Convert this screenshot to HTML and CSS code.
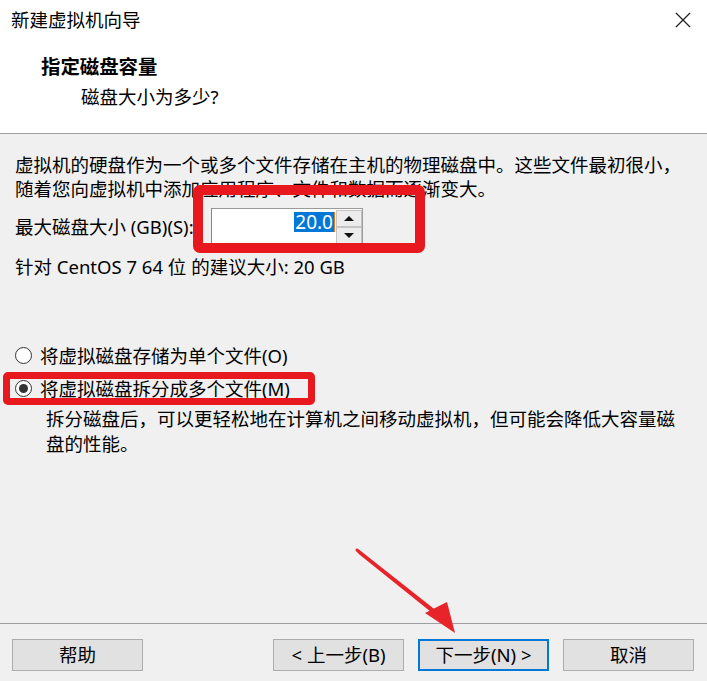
FILE: index.html
```html
<!DOCTYPE html>
<html lang="zh-CN">
<head>
<meta charset="utf-8">
<title>新建虚拟机向导</title>
<link rel="stylesheet" href="styles.css">
</head>
<body>
<div class="dialog">
  <header class="header">
    <div class="titlebar">
      <span class="title">新建虚拟机向导</span>
      <svg class="close" width="16" height="16" viewBox="0 0 16 16"><path d="M1 1 L15 15 M15 1 L1 15" stroke="#222" stroke-width="1.3" fill="none"/></svg>
    </div>
    <div class="heading">指定磁盘容量</div>
    <div class="subheading">磁盘大小为多少?</div>
  </header>

  <main class="content">
    <p class="intro">虚拟机的硬盘作为一个或多个文件存储在主机的物理磁盘中。这些文件最初很小，<br>随着您向虚拟机中添加应用程序、文件和数据而逐渐变大。</p>

    <div class="size-row">
      <label class="size-label">最大磁盘大小 (GB)(S):</label>
      <div class="spin">
        <div class="spin-field"><span class="spin-value">20.0</span></div>
        <div class="spin-btns">
          <span class="spin-btn"><span class="tri-up"></span></span>
          <span class="spin-btn"><span class="tri-down"></span></span>
        </div>
      </div>
    </div>

    <p class="recommend">针对 CentOS 7 64 位 的建议大小: 20 GB</p>

    <div class="options">
      <div class="radio"><span class="radio-circle"></span>将虚拟磁盘存储为单个文件(O)</div>
      <div class="radio"><span class="radio-circle checked"></span>将虚拟磁盘拆分成多个文件(M)</div>
      <p class="desc">拆分磁盘后，可以更轻松地在计算机之间移动虚拟机，但可能会降低大容量磁<br>盘的性能。</p>
    </div>
  </main>

  <footer class="footer">
    <button class="btn">帮助</button>
    <div class="nav-buttons">
      <button class="btn">&lt; 上一步(B)</button>
      <button class="btn btn-default">下一步(N) &gt;</button>
      <button class="btn">取消</button>
    </div>
  </footer>

  <div class="mark mark-size"></div>
  <div class="mark mark-split"></div>
  <svg class="arrow" width="707" height="681" viewBox="0 0 707 681">
    <path d="M357 550 L360 553 L436 614 L433 610 Z" fill="#e8242b" stroke="#e8242b" stroke-width="3" stroke-linejoin="round"/>
    <polygon points="425,613 447,602 455,633" fill="#e8242b"/>
  </svg>
</div>
</body>
</html>
```

FILE: styles.css
```css
* { box-sizing: border-box; }

html, body {
  margin: 0;
  padding: 0;
  background: #f0f0f0;
}

.dialog {
  position: relative;
  width: 707px;
  height: 681px;
  display: flex;
  flex-direction: column;
  background: #f0f0f0;
  font-family: "Noto Sans", "Noto Sans CJK SC", sans-serif;
  font-size: 18.5px;
  color: #000;
  overflow: hidden;
}

/* header */
.header {
  flex: none;
  height: 134px;
  background: #fff;
  border-bottom: 1px solid #a0a0a0;
}

.titlebar {
  display: flex;
  justify-content: space-between;
  align-items: center;
  padding: 8px 16px 0 11px;
  height: 32px;
  line-height: 24px;
}

.close {
  display: block;
}

.heading {
  margin-top: 23px;
  padding-left: 41px;
  line-height: 24px;
  font-size: 19.4px;
  font-weight: bold;
}

.subheading {
  margin-top: 6px;
  padding-left: 81px;
  line-height: 24px;
}

/* content */
.content {
  flex: 1;
  padding: 19px 0 0 15px;
}

.intro {
  margin: 0;
  line-height: 24px;
}

.size-row {
  display: flex;
  align-items: center;
  margin-top: 7px;
  height: 38px;
}

.size-label {
  flex: none;
  width: 196px;
  line-height: 24px;
}

.spin {
  display: flex;
  height: 38px;
  border: 1px solid #9a9a9a;
  border-left-color: #5d8ec9;
  background: #fff;
}

.spin-field {
  width: 124px;
  text-align: right;
  padding: 3px 1px 0 0;
  font-size: 19px;
  line-height: 20px;
}

.spin-value {
  display: inline-block;
  background: #0078d7;
  color: #fff;
  padding: 0 1px;
  border-right: 1px solid #e87a22;
}

.spin-btns {
  width: 26px;
  display: flex;
  flex-direction: column;
  padding-top: 1px;
}

.spin-btn {
  height: 17px;
  background: #ececec;
  border: 1px solid #c4c4c4;
  display: flex;
  align-items: center;
  justify-content: center;
}

.tri-up {
  width: 0;
  height: 0;
  border-left: 5px solid transparent;
  border-right: 5px solid transparent;
  border-bottom: 5px solid #111;
}

.tri-down {
  width: 0;
  height: 0;
  border-left: 5px solid transparent;
  border-right: 5px solid transparent;
  border-top: 5px solid #111;
}

.recommend {
  margin: 9px 0 0;
  line-height: 24px;
}

.options {
  margin-top: 60px;
}

.radio {
  display: flex;
  align-items: center;
  height: 33px;
  line-height: 33px;
}

.radio-circle {
  flex: none;
  width: 17px;
  height: 17px;
  margin-right: 8px;
  border: 1px solid #333;
  border-radius: 50%;
  background: #fff;
  display: flex;
  align-items: center;
  justify-content: center;
}

.radio-circle.checked::after {
  content: "";
  width: 9px;
  height: 9px;
  border-radius: 50%;
  background: #333;
}

.desc {
  margin: 1px 0 0 31px;
  line-height: 25px;
}

/* footer */
.footer {
  flex: none;
  height: 58px;
  border-top: 1px solid #a0a0a0;
  display: flex;
  justify-content: space-between;
  align-items: flex-start;
  padding: 15px 13px 0 12px;
}

.nav-buttons {
  display: flex;
  gap: 14px;
}

.btn {
  width: 131px;
  height: 32px;
  font-family: inherit;
  font-size: 18.5px;
  color: #000;
  background: #e1e1e1;
  border: 1px solid #adadad;
  padding: 0;
  line-height: 28px;
}

.btn-default {
  border: 2px solid #0078d7;
}

/* annotations */
.mark {
  position: absolute;
  border-style: solid;
  border-color: #e8181f;
  pointer-events: none;
}

.mark-size {
  left: 193px;
  top: 185px;
  width: 232px;
  height: 68px;
  border-width: 10px;
  border-radius: 7px;
}

.mark-split {
  left: 3px;
  top: 372px;
  width: 312px;
  height: 33px;
  border-width: 7px;
  border-radius: 5px;
}

.arrow {
  position: absolute;
  left: 0;
  top: 0;
  pointer-events: none;
}
```
